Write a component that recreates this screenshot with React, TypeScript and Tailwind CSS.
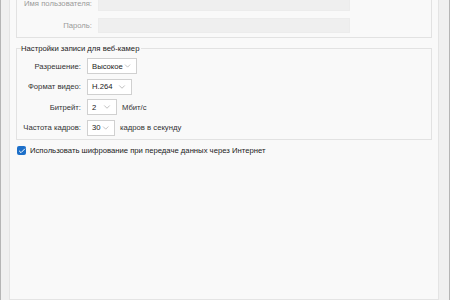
import { ChevronDown, Check } from "lucide-react";

const font = { fontFamily: '"Liberation Sans", Arial, sans-serif' };

function Select({ value, width }: { value: string; width: string }) {
  return (
    <div
      className={`flex h-[16px] items-center justify-between border border-[#d0d0d0] bg-white pl-[4px] pr-[4px] text-[#222] ${width}`}
    >
      <span>{value}</span>
      <ChevronDown size={10} strokeWidth={1.2} className="text-[#808080]" />
    </div>
  );
}

function Row({ label, children }: { label: string; children: React.ReactNode }) {
  return (
    <div className="flex h-[20.5px] items-center">
      <div className="w-[70px] whitespace-nowrap pr-[6px] text-right text-[#333]">{label}</div>
      {children}
    </div>
  );
}

export default function App() {
  return (
    <div
      className="flex h-[300px] w-[450px] overflow-hidden border-x border-[#b5b5b5] bg-[#f0f0f0] text-[7.7px] leading-[9px]"
      style={font}
    >
      <div className="-mt-[12px] ml-[8px] mr-[10px] flex-1 border border-[#e4e4e4] bg-[#f9f9f9] px-[6px]">
        {/* credentials box */}
        <div className="border border-[#e2e2e2] pt-[2px] pb-[1px]">
          <div className="flex h-[22px] items-center">
            <div className="w-[81px] whitespace-nowrap pr-[6px] text-right text-[#9a9a9a]">Имя пользователя:</div>
            <div className="h-[15px] w-[252px] border border-[#ececec] bg-[#efefef]" />
          </div>
          <div className="flex h-[22px] items-center">
            <div className="w-[81px] whitespace-nowrap pr-[6px] text-right text-[#9a9a9a]">Пароль:</div>
            <div className="h-[15px] w-[252px] border border-[#ececec] bg-[#efefef]" />
          </div>
        </div>

        {/* webcam recording settings */}
        <fieldset className="mt-[6px] border border-[#e2e2e2] pt-[3px] pb-[1px]">
          <legend className="ml-[4px] pr-[2px] text-[#222]">Настройки записи для веб-камер</legend>
          <Row label="Разрешение:">
            <Select value="Высокое" width="w-[50px]" />
          </Row>
          <Row label="Формат видео:">
            <Select value="H.264" width="w-[45px]" />
          </Row>
          <Row label="Битрейт:">
            <Select value="2" width="w-[30px]" />
            <span className="ml-[5px] text-[#333]">Мбит/с</span>
          </Row>
          <Row label="Частота кадров:">
            <Select value="30" width="w-[28px]" />
            <span className="ml-[5px] text-[#333]">кадров в секунду</span>
          </Row>
        </fieldset>

        <label className="mt-[6px] flex items-center gap-[4px] pl-[1px] text-[#222]">
          <span className="flex h-[9px] w-[9px] items-center justify-center rounded-[2px] bg-[#1c6fc9]">
            <Check size={8} strokeWidth={3} className="text-white" />
          </span>
          Использовать шифрование при передаче данных через Интернет
        </label>
      </div>
    </div>
  );
}
